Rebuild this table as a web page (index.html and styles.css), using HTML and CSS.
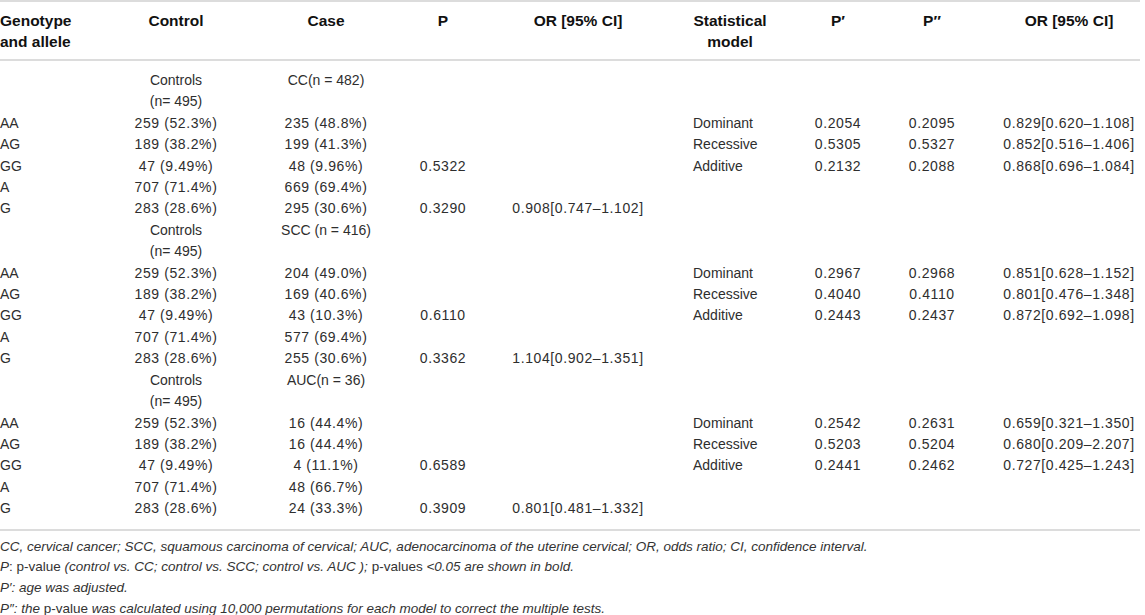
FILE: index.html
```html
<!DOCTYPE html>
<html lang="en">
<head>
  <meta charset="UTF-8" />
  <title>Genotype and allele frequencies</title>
  <link rel="stylesheet" href="styles.css">
</head>
<body>

  <table class="gt">
    <colgroup>
      <col class="c-geno">
      <col class="c-ctrl">
      <col class="c-case">
      <col class="c-p">
      <col class="c-or">
      <col class="c-model">
      <col class="c-p1">
      <col class="c-p2">
      <col class="c-or2">
    </colgroup>
    <thead>
      <tr>
        <th class="left">Genotype<br>and allele</th>
        <th>Control</th>
        <th>Case</th>
        <th>P</th>
        <th>OR [95% CI]</th>
        <th>Statistical<br>model</th>
        <th>P′</th>
        <th>P′′</th>
        <th class="or2">OR [95% CI]</th>
      </tr>
    </thead>
    <tbody>
      <!-- control vs CC -->
      <tr>
        <td></td><td>Controls<br>(n= 495)</td><td>CC(n = 482)</td>
        <td></td><td></td><td></td><td></td><td></td><td></td>
      </tr>
      <tr>
        <td class="left">AA</td><td class="num">259 (52.3%)</td><td class="num">235 (48.8%)</td>
        <td></td><td></td><td class="model">Dominant</td>
        <td class="num">0.2054</td><td class="num">0.2095</td><td class="num or2">0.829[0.620–1.108]</td>
      </tr>
      <tr>
        <td class="left">AG</td><td class="num">189 (38.2%)</td><td class="num">199 (41.3%)</td>
        <td></td><td></td><td class="model">Recessive</td>
        <td class="num">0.5305</td><td class="num">0.5327</td><td class="num or2">0.852[0.516–1.406]</td>
      </tr>
      <tr>
        <td class="left">GG</td><td class="num">47 (9.49%)</td><td class="num">48 (9.96%)</td>
        <td class="num">0.5322</td><td></td><td class="model">Additive</td>
        <td class="num">0.2132</td><td class="num">0.2088</td><td class="num or2">0.868[0.696–1.084]</td>
      </tr>
      <tr>
        <td class="left">A</td><td class="num">707 (71.4%)</td><td class="num">669 (69.4%)</td>
        <td></td><td></td><td></td><td></td><td></td><td></td>
      </tr>
      <tr>
        <td class="left">G</td><td class="num">283 (28.6%)</td><td class="num">295 (30.6%)</td>
        <td class="num">0.3290</td><td class="num">0.908[0.747–1.102]</td>
        <td></td><td></td><td></td><td></td>
      </tr>

      <!-- control vs SCC -->
      <tr>
        <td></td><td>Controls<br>(n= 495)</td><td>SCC (n = 416)</td>
        <td></td><td></td><td></td><td></td><td></td><td></td>
      </tr>
      <tr>
        <td class="left">AA</td><td class="num">259 (52.3%)</td><td class="num">204 (49.0%)</td>
        <td></td><td></td><td class="model">Dominant</td>
        <td class="num">0.2967</td><td class="num">0.2968</td><td class="num or2">0.851[0.628–1.152]</td>
      </tr>
      <tr>
        <td class="left">AG</td><td class="num">189 (38.2%)</td><td class="num">169 (40.6%)</td>
        <td></td><td></td><td class="model">Recessive</td>
        <td class="num">0.4040</td><td class="num">0.4110</td><td class="num or2">0.801[0.476–1.348]</td>
      </tr>
      <tr>
        <td class="left">GG</td><td class="num">47 (9.49%)</td><td class="num">43 (10.3%)</td>
        <td class="num">0.6110</td><td></td><td class="model">Additive</td>
        <td class="num">0.2443</td><td class="num">0.2437</td><td class="num or2">0.872[0.692–1.098]</td>
      </tr>
      <tr>
        <td class="left">A</td><td class="num">707 (71.4%)</td><td class="num">577 (69.4%)</td>
        <td></td><td></td><td></td><td></td><td></td><td></td>
      </tr>
      <tr>
        <td class="left">G</td><td class="num">283 (28.6%)</td><td class="num">255 (30.6%)</td>
        <td class="num">0.3362</td><td class="num">1.104[0.902–1.351]</td>
        <td></td><td></td><td></td><td></td>
      </tr>

      <!-- control vs AUC -->
      <tr>
        <td></td><td>Controls<br>(n= 495)</td><td>AUC(n = 36)</td>
        <td></td><td></td><td></td><td></td><td></td><td></td>
      </tr>
      <tr>
        <td class="left">AA</td><td class="num">259 (52.3%)</td><td class="num">16 (44.4%)</td>
        <td></td><td></td><td class="model">Dominant</td>
        <td class="num">0.2542</td><td class="num">0.2631</td><td class="num or2">0.659[0.321–1.350]</td>
      </tr>
      <tr>
        <td class="left">AG</td><td class="num">189 (38.2%)</td><td class="num">16 (44.4%)</td>
        <td></td><td></td><td class="model">Recessive</td>
        <td class="num">0.5203</td><td class="num">0.5204</td><td class="num or2">0.680[0.209–2.207]</td>
      </tr>
      <tr>
        <td class="left">GG</td><td class="num">47 (9.49%)</td><td class="num">4 (11.1%)</td>
        <td class="num">0.6589</td><td></td><td class="model">Additive</td>
        <td class="num">0.2441</td><td class="num">0.2462</td><td class="num or2">0.727[0.425–1.243]</td>
      </tr>
      <tr>
        <td class="left">A</td><td class="num">707 (71.4%)</td><td class="num">48 (66.7%)</td>
        <td></td><td></td><td></td><td></td><td></td><td></td>
      </tr>
      <tr class="last">
        <td class="left">G</td><td class="num">283 (28.6%)</td><td class="num">24 (33.3%)</td>
        <td class="num">0.3909</td><td class="num">0.801[0.481–1.332]</td>
        <td></td><td></td><td></td><td></td>
      </tr>
    </tbody>
  </table>

  <div class="notes">
    <p><i>CC, cervical cancer; SCC, squamous carcinoma of cervical; AUC, adenocarcinoma of the uterine cervical; OR, odds ratio; CI, confidence interval.</i></p>
    <p><i>P</i>: p-value <i>(control vs. CC; control vs. SCC; control vs. AUC ); </i>p-values <i>&lt;0.05 are shown in bold.</i></p>
    <p><i>P′: age was adjusted.</i></p>
    <p><i>P″: the </i>p-value<i> was calculated using 10,000 permutations for each model to correct the multiple tests.</i></p>
  </div>

</body>
</html>
```

FILE: styles.css
```css
body {
  margin: 0;
  background: #fff;
  color: #2e2e2e;
  font-family: "Liberation Sans", Arial, sans-serif;
  font-size: 14px;
}

.gt {
  width: 1140px;
  border-collapse: collapse;
  table-layout: fixed;
  border-top: 2px solid #dcdcdc;
  border-bottom: 2px solid #dcdcdc;
}

.c-geno  { width: 100px; }
.c-ctrl  { width: 152px; }
.c-case  { width: 148px; }
.c-p     { width: 86px; }
.c-or    { width: 184px; }
.c-model { width: 120px; }
.c-p1    { width: 96px; }
.c-p2    { width: 92px; }
.c-or2   { width: 162px; }

.gt th {
  font-size: 15.5px;
  font-weight: bold;
  color: #111;
  line-height: 21px;
  text-align: center;
  vertical-align: top;
  padding: 8px 0 7px;
  border-bottom: 2px solid #dcdcdc;
  white-space: nowrap;
}

.gt td {
  padding: 0;
  line-height: 21.4px;
  text-align: center;
  vertical-align: top;
  white-space: nowrap;
}

.gt th.left,
.gt td.left {
  text-align: left;
}

.gt tbody tr:first-child td {
  padding-top: 9px;
}

.gt tr.last td {
  padding-bottom: 9px;
}

.gt td.num {
  letter-spacing: 0.6px;
}

.gt td.model {
  text-align: left;
  padding-left: 23px;
}

.gt .or2 {
  padding-left: 20px;
}

.notes {
  margin-top: 6px;
  color: #333;
  font-size: 13.5px;
}

.notes p {
  margin: 0;
  line-height: 20.9px;
}
```
